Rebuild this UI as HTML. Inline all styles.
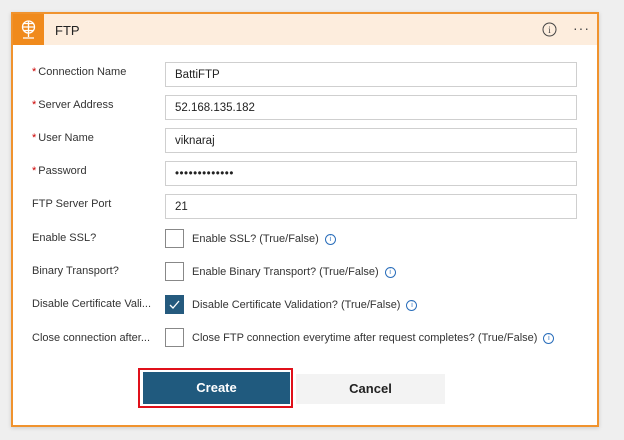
<!DOCTYPE html>
<html><head><style>
body{margin:0;width:624px;height:440px;background:#efefef;font-family:"Liberation Sans",sans-serif;position:relative;overflow:hidden}
.card{position:absolute;left:11px;top:12px;width:584px;height:411px;border:2px solid #f0932e;background:#fff;box-shadow:0 1px 4px rgba(0,0,0,.15)}
.hdr{position:absolute;left:0;top:0;width:584px;height:31px;background:#fdeddd}
.ico{position:absolute;left:0;top:0;width:31px;height:31px;background:#f08a1c}
.ttl{position:absolute;left:42px;top:9px;font-size:13px;color:#222}
.lab{position:absolute;left:19px;font-size:11px;color:#333}
.lab b{color:#c00;font-weight:normal;margin-right:2px}
.inp{position:absolute;left:152px;width:412px;height:25px;border:1px solid #cfcfcf;font-size:11.5px;color:#222;line-height:25px;padding-left:9px;box-sizing:border-box}
.cb{position:absolute;left:152px;width:19px;height:19px;border:1px solid #888;box-sizing:border-box;background:#fff}
.cbt{position:absolute;left:179px;font-size:11px;color:#333}
.i{display:inline-block;width:9px;height:9px;border:1px solid #2a6ebb;border-radius:50%;font-size:7px;line-height:9px;text-align:center;color:#2a6ebb;margin-left:6px;vertical-align:1px}
</style></head><body>
<div class="card">
<div class="hdr"><div class="ico"><svg width="31" height="31" viewBox="0 0 31 31" fill="none" stroke="#fff" stroke-width="1.3"><circle cx="15.5" cy="13" r="6"/><path d="M9.5 13h12M15.5 7v12M11 9.5h9M11 16.5h9"/><path d="M15.5 19v4M10 24h11"/></svg></div>
<div class="ttl">FTP</div>
<svg style="position:absolute;left:529px;top:8px" width="15" height="15"><circle cx="7.5" cy="7.5" r="6.5" fill="none" stroke="#444"/><text x="7.5" y="11" font-size="9" text-anchor="middle" fill="#444" font-family="Liberation Serif">i</text></svg>
<div style="position:absolute;left:560px;top:6px;font-size:14px;color:#444;letter-spacing:1px">···</div>
</div>
<div class="lab" style="top:52px"><b>*</b>Connection Name</div>
<div class="inp" style="top:48px">BattiFTP</div>
<div class="lab" style="top:85px"><b>*</b>Server Address</div>
<div class="inp" style="top:81px">52.168.135.182</div>
<div class="lab" style="top:118px"><b>*</b>User Name</div>
<div class="inp" style="top:114px">viknaraj</div>
<div class="lab" style="top:151px"><b>*</b>Password</div>
<div class="inp" style="top:147px;letter-spacing:0.5px">•••••••••••••</div>
<div class="lab" style="top:184px">FTP Server Port</div>
<div class="inp" style="top:180px">21</div>
<div class="lab" style="top:218px">Enable SSL?</div>
<div class="cb" style="top:215px"></div><div class="cbt" style="top:219px">Enable SSL? (True/False)<span class="i">i</span></div>
<div class="lab" style="top:251px">Binary Transport?</div>
<div class="cb" style="top:248px"></div><div class="cbt" style="top:252px">Enable Binary Transport? (True/False)<span class="i">i</span></div>
<div class="lab" style="top:284px">Disable Certificate Vali...</div>
<div class="cb" style="top:281px;background:#255a7e;border-color:#255a7e"><svg width="17" height="17"><path d="M4 9l3 3 6-7" fill="none" stroke="#fff" stroke-width="1.3"/></svg></div><div class="cbt" style="top:285px">Disable Certificate Validation? (True/False)<span class="i">i</span></div>
<div class="lab" style="top:318px">Close connection after...</div>
<div class="cb" style="top:314px"></div><div class="cbt" style="top:318px">Close FTP connection everytime after request completes? (True/False)<span class="i">i</span></div>
<div style="position:absolute;left:125px;top:354px;width:155px;height:40px;border:2px solid #e0101a;box-sizing:border-box;background:#fff"></div>
<div style="position:absolute;left:130px;top:358px;width:147px;height:32px;background:#205a7e;color:#fff;font-weight:bold;font-size:13px;text-align:center;line-height:32px">Create</div>
<div style="position:absolute;left:283px;top:360px;width:149px;height:30px;background:#f3f3f3;color:#222;font-weight:bold;font-size:13px;text-align:center;line-height:30px">Cancel</div>
</div>
</body></html>
